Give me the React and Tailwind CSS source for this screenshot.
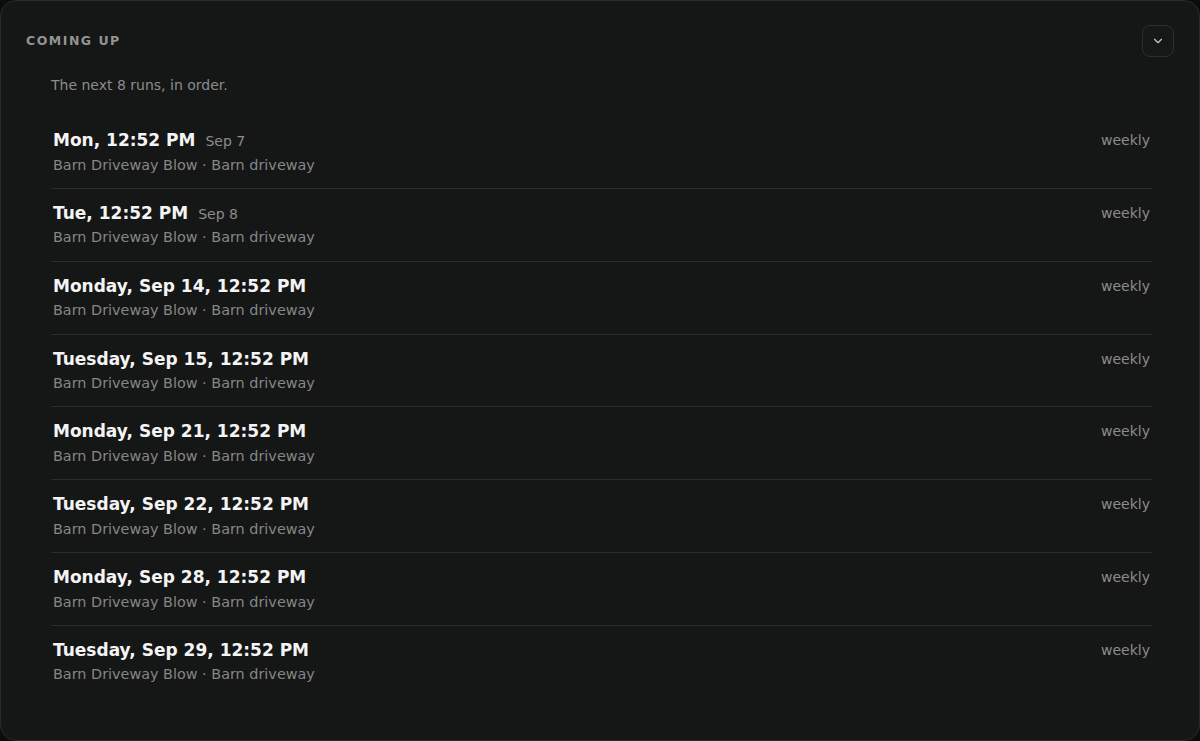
import { ChevronDown } from 'lucide-react';

const runs = [
    { when: 'Mon, 12:52 PM', date: 'Sep 7' },
    { when: 'Tue, 12:52 PM', date: 'Sep 8' },
    { when: 'Monday, Sep 14, 12:52 PM' },
    { when: 'Tuesday, Sep 15, 12:52 PM' },
    { when: 'Monday, Sep 21, 12:52 PM' },
    { when: 'Tuesday, Sep 22, 12:52 PM' },
    { when: 'Monday, Sep 28, 12:52 PM' },
    { when: 'Tuesday, Sep 29, 12:52 PM' },
];

function RunRow({ run, last }) {
    return (
        <li
            className={`flex items-start justify-between px-0.5 py-3 ${
                last ? '' : 'border-b border-[#2a2b2b]'
            }`}
        >
            <div className="flex flex-col">
                <div className="flex items-baseline gap-2.5">
                    <span className="text-[17px] font-bold leading-[25.5px] text-[#f4f4f4]">
                        {run.when}
                    </span>
                    {run.date ? (
                        <span className="text-[14px] leading-[18px] text-[#8c8c8c]">{run.date}</span>
                    ) : null}
                </div>
                <span className="text-[14.4px] leading-[22.35px] text-[#868686]">
                    Barn Driveway Blow · Barn driveway
                </span>
            </div>
            <span className="text-[14px] leading-[25.5px] text-[#8c8c8c]">weekly</span>
        </li>
    );
}

export default function App() {
    return (
        <div
            className="h-[741px] w-[1200px] bg-[#0c0c0c]"
            style={{ fontFamily: '"DejaVu Sans", Verdana, sans-serif' }}
        >
            <section className="h-full rounded-2xl border border-[#2a2b2b] bg-[#151616] pt-6 pr-[25px] pb-6 pl-[25px]">
                <header className="flex items-center justify-between">
                    <h2 className="text-[12.5px] font-bold uppercase tracking-[0.12em] text-[#939393]">
                        Coming up
                    </h2>
                    <button
                        type="button"
                        className="flex h-8 w-8 items-center justify-center rounded-lg border border-[#2e2f2f] bg-[#161717] text-[#c9c9c9]"
                    >
                        <ChevronDown size={14} strokeWidth={2} />
                    </button>
                </header>

                <div className="ml-[25px] mr-[22px]">
                    <p className="mt-[18px] text-[14px] leading-[21px] text-[#8c8c8c]">
                        The next 8 runs, in order.
                    </p>
                    <ul className="mt-5">
                        {runs.map((run, i) => (
                            <RunRow key={run.when} run={run} last={i === runs.length - 1} />
                        ))}
                    </ul>
                </div>
            </section>
        </div>
    );
}
